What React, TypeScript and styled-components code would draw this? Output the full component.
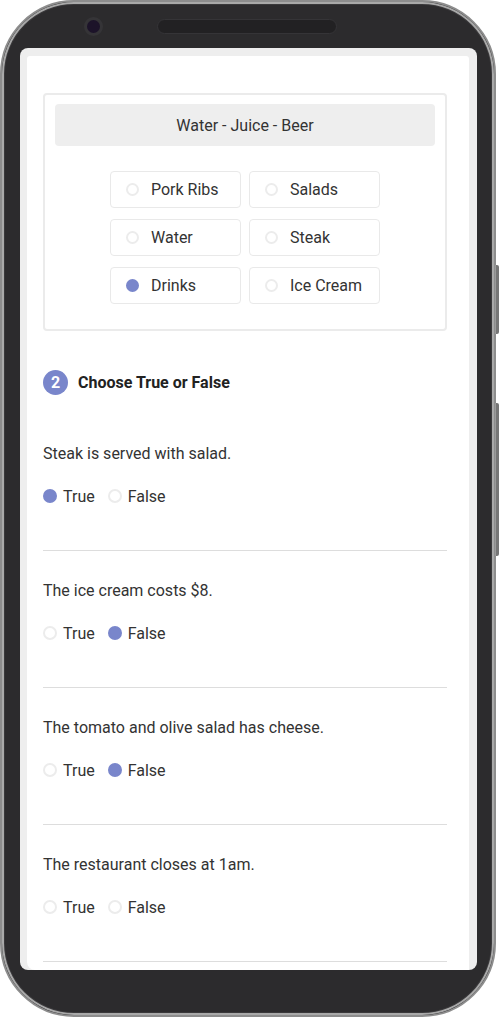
import React from "react";
import styled, { createGlobalStyle } from "styled-components";

const Global = createGlobalStyle`
  html, body { margin: 0; padding: 0; background: #ffffff; }
  body { font-family: Roboto, "Liberation Sans", Arial, sans-serif; color: #333; }
  * { box-sizing: border-box; }
`;

const Page = styled.div`
  width: 500px;
  height: 1019px;
  padding: 0;
  overflow: hidden;
`;

const Phone = styled.div`
  position: relative;
  width: 496px;
  height: 1017px;
  border: 2px solid #8d8d8d;
  border-radius: 74px;
  background: #2c2b2d;
  box-shadow: inset 0 0 0 2px #a9a9a9, inset 0 0 0 3px #3a393b;
  display: flex;
  flex-direction: column;
`;

const SideButton = styled.div<{ $top: number; $h: number }>`
  position: absolute;
  right: -5px;
  top: ${(p) => p.$top}px;
  width: 4px;
  height: ${(p) => p.$h}px;
  background: #767676;
  border-left: 1px solid #9a9a9a;
  border-radius: 0 2px 2px 0;
`;

const Bezel = styled.div`
  height: 46px;
  display: flex;
  align-items: center;
  padding: 2px 0 0 82px;
  gap: 54px;
  flex-shrink: 0;
`;

const Camera = styled.div`
  width: 19px;
  height: 19px;
  border-radius: 50%;
  background: #1c1329;
  border: 3.5px solid #353437;
`;

const Speaker = styled.div`
  width: 180px;
  height: 15px;
  border-radius: 8px;
  background: #222123;
  border: 1px solid #353437;
`;

const Screen = styled.div`
  height: 922px;
  margin: 0 17px 0 18px;
  background: #eeeeee;
  border-radius: 8px;
  padding: 8px 8px 0 7px;
  overflow: hidden;
  flex-shrink: 0;
`;

const Viewport = styled.div`
  height: 100%;
  background: #ffffff;
  border-radius: 3px 3px 0 8px;
  overflow: hidden;
  padding: 37px 22px 0 16px;
`;

const Card = styled.div`
  border: 2px solid #ebebeb;
  border-radius: 4px;
  padding: 9px 10px 25px;
`;

const Prompt = styled.div`
  height: 42px;
  background: #eeeeee;
  border-radius: 4px;
  display: flex;
  align-items: center;
  justify-content: center;
  font-size: 16px;
  color: #333;
  margin-bottom: 25px;
`;

const OptionGrid = styled.div`
  display: grid;
  grid-template-columns: 131px 131px;
  column-gap: 8px;
  row-gap: 11px;
  justify-content: center;
`;

const OptionButton = styled.div`
  height: 37px;
  border: 1px solid #e9e9e9;
  border-radius: 4px;
  display: flex;
  align-items: center;
  padding-left: 15px;
  gap: 12px;
  font-size: 16px;
  color: #333;
`;

const Dot = styled.span<{ $on?: boolean; $size: number }>`
  width: ${(p) => p.$size}px;
  height: ${(p) => p.$size}px;
  border-radius: 50%;
  flex-shrink: 0;
  background: ${(p) => (p.$on ? "#7986cb" : "#ffffff")};
  border: 2px solid ${(p) => (p.$on ? "#7986cb" : "#ececec")};
`;

const SectionHead = styled.div`
  margin-top: 39px;
  margin-bottom: 19px;
  display: flex;
  align-items: center;
  gap: 10px;
  font-size: 16px;
  font-weight: 700;
  color: #222;
`;

const Badge = styled.span`
  width: 25px;
  height: 25px;
  border-radius: 50%;
  background: #7986cb;
  color: #fff;
  font-size: 16px;
  font-weight: 700;
  display: flex;
  align-items: center;
  justify-content: center;
`;

const Question = styled.div`
  padding: 28px 0 42px;
  border-bottom: 1px solid #dddddd;
`;

const QText = styled.div`
  font-size: 16px;
  line-height: 24px;
  color: #333;
  margin-bottom: 18px;
`;

const Choices = styled.div`
  display: flex;
  align-items: center;
  gap: 13px;
  height: 24px;
`;

const Choice = styled.label`
  display: flex;
  align-items: center;
  gap: 6px;
  font-size: 16px;
  color: #333;
`;

const options = [
  { label: "Pork Ribs", on: false },
  { label: "Salads", on: false },
  { label: "Water", on: false },
  { label: "Steak", on: false },
  { label: "Drinks", on: true },
  { label: "Ice Cream", on: false },
];

const questions: { text: string; answer: "true" | "false" | null }[] = [
  { text: "Steak is served with salad.", answer: "true" },
  { text: "The ice cream costs $8.", answer: "false" },
  { text: "The tomato and olive salad has cheese.", answer: "false" },
  { text: "The restaurant closes at 1am.", answer: null },
];

export default function App() {
  return (
    <Page>
      <Global />
      <Phone>
        <SideButton $top={263} $h={69} />
        <SideButton $top={401} $h={153} />
        <Bezel>
          <Camera />
          <Speaker />
        </Bezel>
        <Screen>
          <Viewport>
            <Card>
              <Prompt>Water - Juice - Beer</Prompt>
              <OptionGrid>
                {options.map((o) => (
                  <OptionButton key={o.label}>
                    <Dot $size={13} $on={o.on} />
                    {o.label}
                  </OptionButton>
                ))}
              </OptionGrid>
            </Card>
            <SectionHead>
              <Badge>2</Badge>
              Choose True or False
            </SectionHead>
            {questions.map((q, i) => (
              <Question key={i}>
                <QText>{q.text}</QText>
                <Choices>
                  <Choice>
                    <Dot $size={14} $on={q.answer === "true"} />
                    True
                  </Choice>
                  <Choice>
                    <Dot $size={14} $on={q.answer === "false"} />
                    False
                  </Choice>
                </Choices>
              </Question>
            ))}
          </Viewport>
        </Screen>
      </Phone>
    </Page>
  );
}
